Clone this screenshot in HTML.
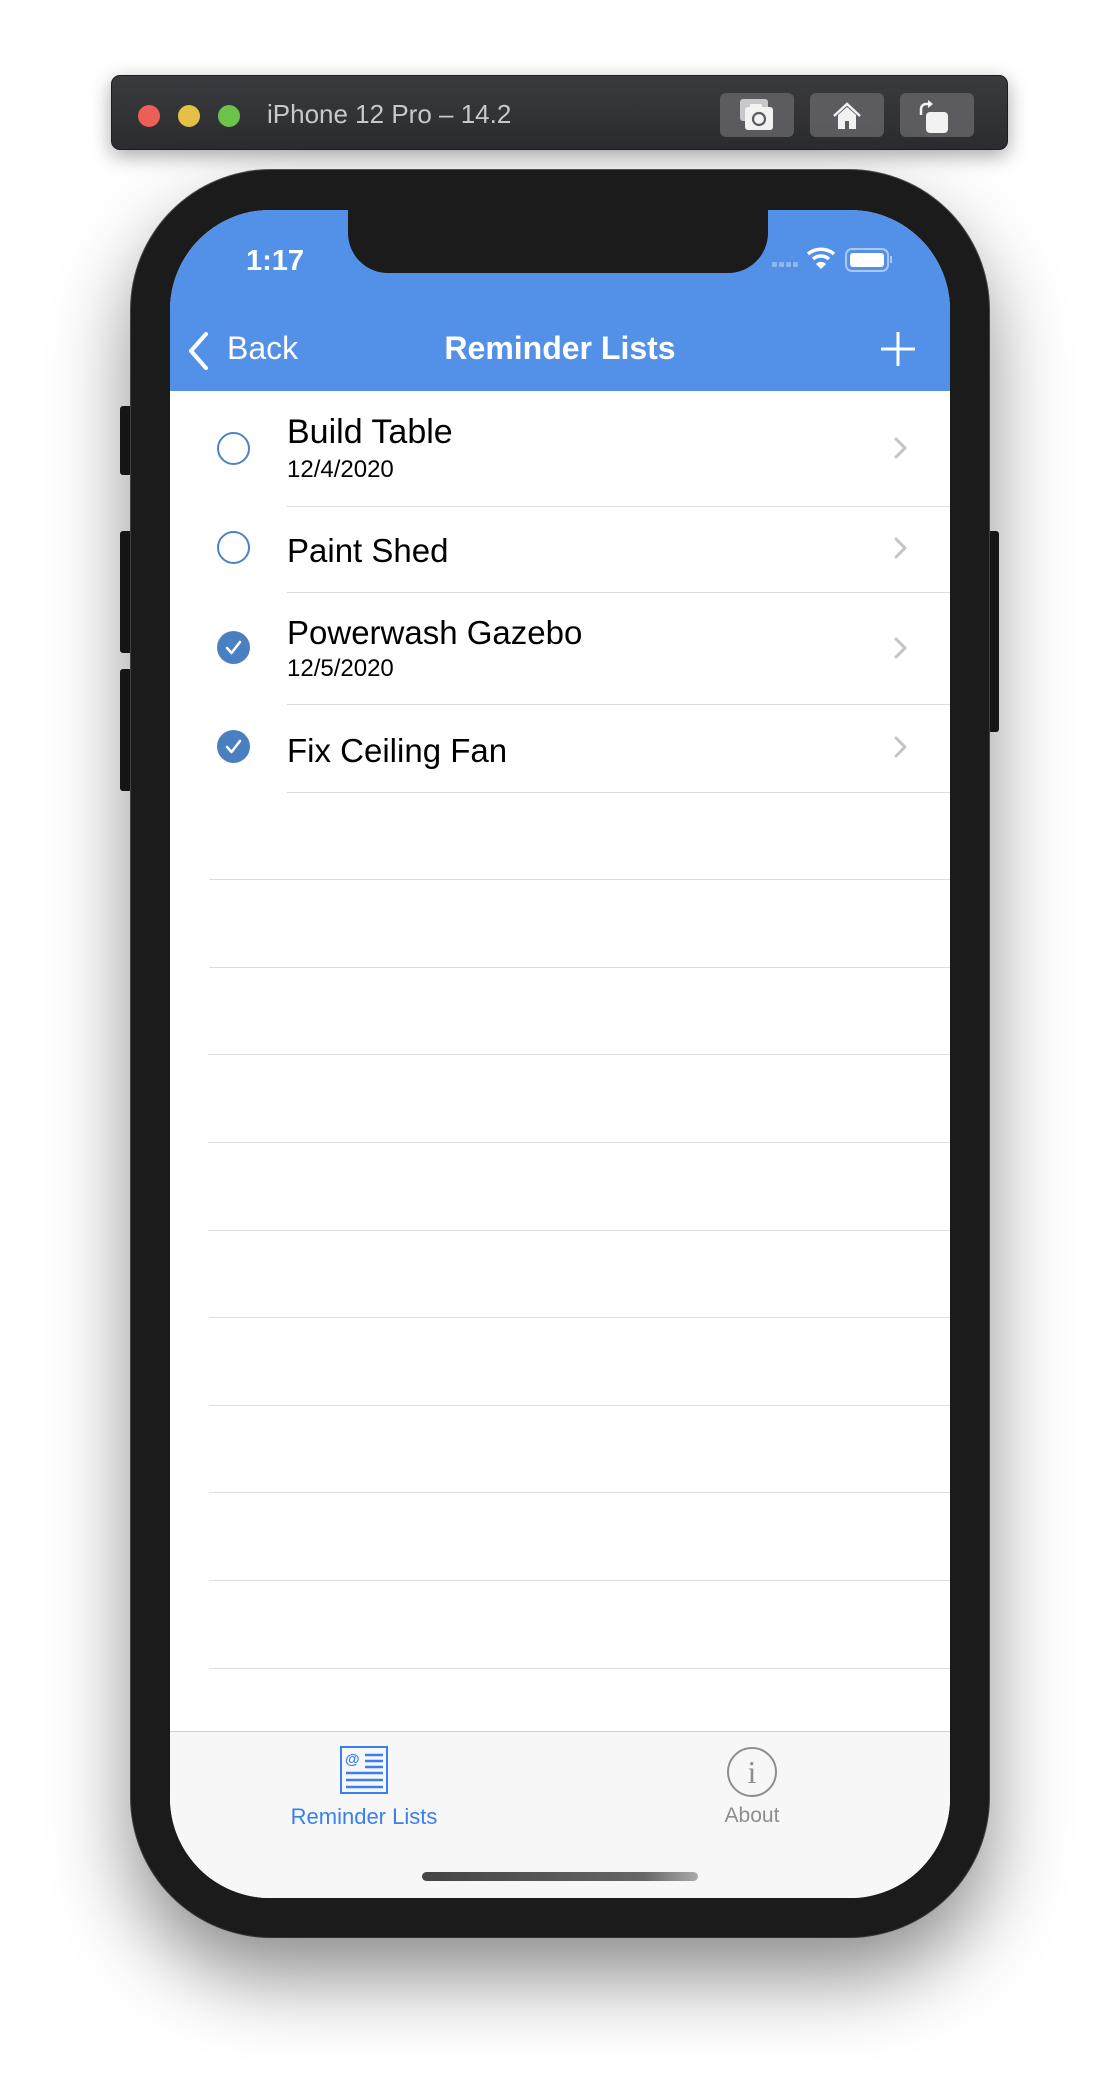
<!DOCTYPE html>
<html><head><meta charset="utf-8"><style>
*{margin:0;padding:0;box-sizing:border-box}
body{width:1120px;height:2086px;background:#fff;position:relative;overflow:hidden;font-family:"Liberation Sans",sans-serif}
.abs{position:absolute}
.toolbar{left:111px;top:75px;width:897px;height:75px;background:linear-gradient(#3a3b3e,#2b2c2f);border-radius:9px;border:1px solid #1c1c1e;box-shadow:0 6px 20px rgba(0,0,0,.35)}
.dot{top:29px;width:22px;height:22px;border-radius:50%}
.tbtn{top:17px;width:74px;height:44px;background:#5c5c60;border-radius:6px}
.phone{left:131px;top:170px;width:858px;height:1767px;background:#1b1b1b;border-radius:140px;box-shadow:0 40px 80px rgba(0,0,0,.45),0 0 0 1px #555}
.screen{left:170px;top:210px;width:780px;height:1688px;background:#fff;border-radius:100px;overflow:hidden}
.nav{left:0;top:0;width:780px;height:181px;background:#5291e7}
.notch{left:178px;top:0;width:420px;height:63px;background:#1b1b1b;border-radius:0 0 40px 40px}
.row-t{left:117px;color:#000;font-size:33px}
.row-d{left:117px;color:#000;font-size:24px}
.sep{height:1px;background:#dcdcdc;right:0}
.circ{left:47px;width:33px;height:33px;border-radius:50%;border:2.5px solid #4b83c6}
.fill{background:#4a80c2;border:none}
.btn{background:#1b1b1b;border-radius:3px}
</style></head><body>
<div class="abs toolbar">
 <div class="abs dot" style="left:26px;background:#ec5f57"></div>
 <div class="abs dot" style="left:66px;background:#e4c046"></div>
 <div class="abs dot" style="left:106px;background:#6cc24a"></div>
 <div class="abs" style="left:155px;top:23px;color:#c8c8c8;font-size:26px">iPhone 12 Pro – 14.2</div>
 <div class="abs tbtn" style="left:608px"><svg width="74" height="44"><rect x="20" y="6" width="28" height="22" rx="3" fill="#c8c8c8"/><rect x="25" y="14" width="28" height="23" rx="3" fill="#f2f2f2"/><rect x="30" y="11" width="12" height="5" rx="1" fill="#f2f2f2"/><circle cx="39" cy="26" r="6" fill="none" stroke="#5c5c60" stroke-width="2.2"/></svg></div>
 <div class="abs tbtn" style="left:698px"><svg width="74" height="44"><path d="M24 23 L37 11 L50 23" fill="none" stroke="#f2f2f2" stroke-width="2.5"/><path d="M28 22 L37 14 L46 22 V36 H28Z" fill="#f2f2f2"/><rect x="35" y="28" width="4" height="8" fill="#5c5c60"/></svg></div>
 <div class="abs tbtn" style="left:788px"><svg width="74" height="44"><rect x="26" y="19" width="22" height="21" rx="4" fill="#f2f2f2"/><path d="M21 22 V16 A5 5 0 0 1 26 11 H30" fill="none" stroke="#f2f2f2" stroke-width="2.5"/><path d="M28 7 L33 11 L28 15Z" fill="#f2f2f2"/></svg></div>
</div>
<div class="abs btn" style="left:120px;top:406px;width:12px;height:69px"></div>
<div class="abs btn" style="left:120px;top:531px;width:12px;height:122px"></div>
<div class="abs btn" style="left:120px;top:669px;width:12px;height:122px"></div>
<div class="abs btn" style="left:988px;top:531px;width:11px;height:201px"></div>
<div class="abs phone"></div>
<div class="abs screen">
 <div class="abs nav"></div>
 <div class="abs notch"></div>
 <div class="abs" style="left:76px;top:35px;color:#fff;font-size:29px;font-weight:bold">1:17</div>
 <svg class="abs" style="left:602px;top:36px" width="150" height="30">
  <g fill="#8fb6ee"><rect x="0" y="16" width="5" height="5" rx="1"/><rect x="7" y="16" width="5" height="5" rx="1"/><rect x="14" y="16" width="5" height="5" rx="1"/><rect x="21" y="16" width="5" height="5" rx="1"/></g>
  <path d="M36 8 A20 20 0 0 1 62 8" fill="none" stroke="#fff" stroke-width="3.5"/>
  <path d="M41 13 A12 12 0 0 1 57 13" fill="none" stroke="#fff" stroke-width="3.5"/>
  <path d="M44 18 L49 23 L54 18 A7 7 0 0 0 44 18Z" fill="#fff"/>
  <rect x="74" y="3" width="42" height="22" rx="6" fill="none" stroke="#a9c8f2" stroke-width="2"/>
  <rect x="78" y="7" width="34" height="14" rx="3" fill="#fff"/>
  <rect x="118" y="10" width="2" height="7" fill="#a9c8f2"/>
 </svg>
 <svg class="abs" style="left:16px;top:121px" width="26" height="40"><path d="M20 3 L5 20 L20 37" fill="none" stroke="#fff" stroke-width="4" stroke-linecap="round" stroke-linejoin="round"/></svg>
 <div class="abs" style="left:57px;top:120px;color:#fff;font-size:32px">Back</div>
 <div class="abs" style="left:0;width:780px;text-align:center;top:120px;color:#fff;font-size:32px;font-weight:bold">Reminder Lists</div>
 <svg class="abs" style="left:710px;top:121px" width="36" height="36"><path d="M18 1 V35 M1 18 H35" stroke="#fff" stroke-width="3"/></svg>

 <div class="abs circ" style="top:222px"></div>
 <div class="abs row-t" style="top:203px;font-size:34px">Build Table</div>
 <div class="abs row-d" style="top:246px">12/4/2020</div>
 <div class="abs sep" style="left:117px;top:296px"></div>
 <div class="abs circ" style="top:321px"></div>
 <div class="abs row-t" style="top:322px">Paint Shed</div>
 <div class="abs sep" style="left:117px;top:382px"></div>
 <div class="abs circ fill" style="top:421px"><svg width="33" height="33"><path d="M10 17 L14.5 22 L23 11" fill="none" stroke="#fff" stroke-width="2.5" stroke-linecap="round" stroke-linejoin="round"/></svg></div>
 <div class="abs row-t" style="top:404px">Powerwash Gazebo</div>
 <div class="abs row-d" style="top:445px">12/5/2020</div>
 <div class="abs sep" style="left:117px;top:494px"></div>
 <div class="abs circ fill" style="top:520px"><svg width="33" height="33"><path d="M10 17 L14.5 22 L23 11" fill="none" stroke="#fff" stroke-width="2.5" stroke-linecap="round" stroke-linejoin="round"/></svg></div>
 <div class="abs row-t" style="top:522px">Fix Ceiling Fan</div>
 <div class="abs sep" style="left:117px;top:582px"></div>
 <svg class="abs" style="left:722px;top:226px" width="20" height="480" fill="none" stroke="#c4c4c8" stroke-width="3" stroke-linecap="round" stroke-linejoin="round">
  <path d="M4 3 L13 12 L4 21"/>
  <path d="M4 103 L13 112 L4 121"/>
  <path d="M4 203 L13 212 L4 221"/>
  <path d="M4 302 L13 311 L4 320"/>
 </svg>
 <div class="abs sep" style="left:39px;top:669px"></div>
 <div class="abs sep" style="left:39px;top:757px"></div>
 <div class="abs sep" style="left:39px;top:844px"></div>
 <div class="abs sep" style="left:39px;top:932px"></div>
 <div class="abs sep" style="left:39px;top:1020px"></div>
 <div class="abs sep" style="left:39px;top:1107px"></div>
 <div class="abs sep" style="left:39px;top:1195px"></div>
 <div class="abs sep" style="left:39px;top:1282px"></div>
 <div class="abs sep" style="left:39px;top:1370px"></div>
 <div class="abs sep" style="left:39px;top:1458px"></div>

 <div class="abs" style="left:0;top:1521px;width:780px;height:170px;background:#f7f7f7;border-top:1px solid #cfcfcf"></div>
 <svg class="abs" style="left:169px;top:1535px" width="50" height="50" fill="none" stroke="#3a7ff0" stroke-width="2.5">
  <rect x="2" y="2" width="46" height="46" stroke-width="2"/>
  <text x="6" y="19" font-size="15" font-family="Liberation Sans" fill="#3a7ff0" stroke="none" font-weight="bold">@</text>
  <path d="M26 10 H44 M26 16 H44 M26 22 H44 M7 28 H44 M7 35 H44 M7 42 H44"/>
 </svg>
 <div class="abs" style="left:24px;width:340px;text-align:center;top:1594px;color:#3a7ff0;font-size:22px">Reminder Lists</div>
 <svg class="abs" style="left:556px;top:1536px" width="52" height="52"><circle cx="26" cy="26" r="24" fill="none" stroke="#8e8e8e" stroke-width="2"/><text x="26" y="37" text-anchor="middle" font-family="Liberation Serif" font-size="32" fill="#8e8e8e">i</text></svg>
 <div class="abs" style="left:482px;width:200px;text-align:center;top:1594px;color:#8e8e8e;font-size:21px">About</div>
 <div class="abs" style="left:252px;top:1662px;width:276px;height:9px;border-radius:5px;background:linear-gradient(90deg,#444,#666 80%,#aaa)"></div>
</div>
</body></html>
